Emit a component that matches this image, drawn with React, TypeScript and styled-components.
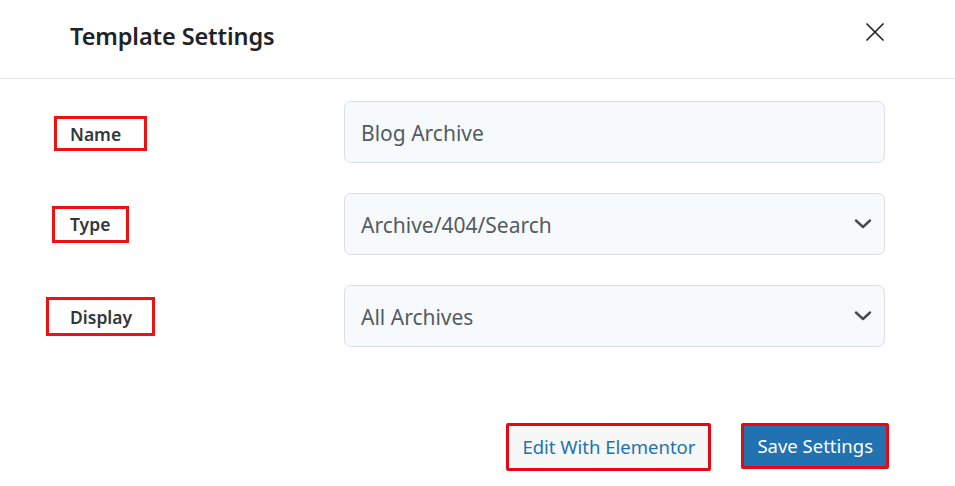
import React from "react";
import styled, { createGlobalStyle } from "styled-components";

const Global = createGlobalStyle`
  html, body { margin: 0; padding: 0; background: #ffffff; }
  body { font-family: "Noto Sans", "Open Sans", Arial, sans-serif; }
  * { box-sizing: border-box; }
`;

const Modal = styled.div`
  width: 955px;
  height: 486px;
  background: #fff;
  display: flex;
  flex-direction: column;
`;

const Header = styled.div`
  height: 79px;
  border-bottom: 1px solid #e2e4e7;
  display: flex;
  align-items: center;
  justify-content: space-between;
  padding: 0 66px 6px 70px;
`;

const Title = styled.h2`
  margin: 0;
  font-size: 23.5px;
  font-weight: 600;
  color: #1d2327;
  letter-spacing: -0.1px;
`;

const CloseBtn = styled.button`
  border: none;
  background: transparent;
  padding: 0;
  width: 24px;
  height: 24px;
  display: flex;
  align-items: center;
  justify-content: center;
  cursor: pointer;
  margin-right: 2px;
  margin-bottom: 9px;
`;

const Body = styled.div`
  display: flex;
  flex-direction: column;
  gap: 30px;
  padding-top: 22px;
`;

const Row = styled.div`
  display: grid;
  grid-template-columns: 344px 541px;
  align-items: center;
  height: 62px;
`;

const LabelBox = styled.label<{ $l: number; $r: number; $h: number; $dy: number }>`
  justify-self: start;
  margin-left: ${(p) => 70 - p.$l - 3}px;
  margin-top: ${(p) => p.$dy}px;
  padding: 0 ${(p) => p.$r}px 0 ${(p) => p.$l}px;
  height: ${(p) => p.$h}px;
  display: flex;
  align-items: center;
  border: 3px solid #ee1111;
  font-size: 17.5px;
  font-weight: 600;
  color: #32373c;
`;

const Field = styled.div`
  position: relative;
  height: 62px;
  border: 1px solid #dcdfe3;
  border-radius: 7px;
  background: #f7fafc;
  display: flex;
  align-items: center;
  padding: 2px 16px 0;
  font-size: 21px;
  color: #555b62;
`;

const Chevron = styled.svg`
  position: absolute;
  right: 12px;
  top: 50%;
  margin-top: -5px;
`;

const Actions = styled.div`
  display: flex;
  justify-content: flex-end;
  align-items: flex-start;
  gap: 30px;
  padding-right: 66px;
  margin-top: 76px;
`;

const Button = styled.button<{ $primary?: boolean }>`
  height: ${(p) => (p.$primary ? 46 : 48)}px;
  padding: 0 13px 2px;
  border: 3px solid #e50914;
  border-radius: 2px;
  background: ${(p) => (p.$primary ? "#2271b1" : "#f6f7f7")};
  color: ${(p) => (p.$primary ? "#ffffff" : "#2271b1")};
  font-family: inherit;
  font-size: 18.5px;
  cursor: pointer;
`;

const ChevronIcon = () => (
  <Chevron width="18" height="10" viewBox="0 0 18 10">
    <path d="M2 1.5 L9 8 L16 1.5" fill="none" stroke="#454b52" strokeWidth="2.4" strokeLinecap="round" strokeLinejoin="round" />
  </Chevron>
);

export default function App() {
  return (
    <>
      <Global />
      <Modal>
        <Header>
          <Title>Template Settings</Title>
          <CloseBtn aria-label="Close">
            <svg width="20" height="20" viewBox="0 0 20 20">
              <path d="M1.5 1.5 L18.5 18.5 M18.5 1.5 L1.5 18.5" stroke="#1e1e1e" strokeWidth="1.6" />
            </svg>
          </CloseBtn>
        </Header>
        <Body>
          <Row>
            <LabelBox $l={13} $r={23} $h={35} $dy={3}>Name</LabelBox>
            <Field>Blog Archive</Field>
          </Row>
          <Row>
            <LabelBox $l={15} $r={16} $h={37} $dy={0}>Type</LabelBox>
            <Field>
              Archive/404/Search
              <ChevronIcon />
            </Field>
          </Row>
          <Row>
            <LabelBox $l={21} $r={20} $h={39} $dy={1}>Display</LabelBox>
            <Field>
              All Archives
              <ChevronIcon />
            </Field>
          </Row>
        </Body>
        <Actions>
          <Button>Edit With Elementor</Button>
          <Button $primary>Save Settings</Button>
        </Actions>
      </Modal>
    </>
  );
}
